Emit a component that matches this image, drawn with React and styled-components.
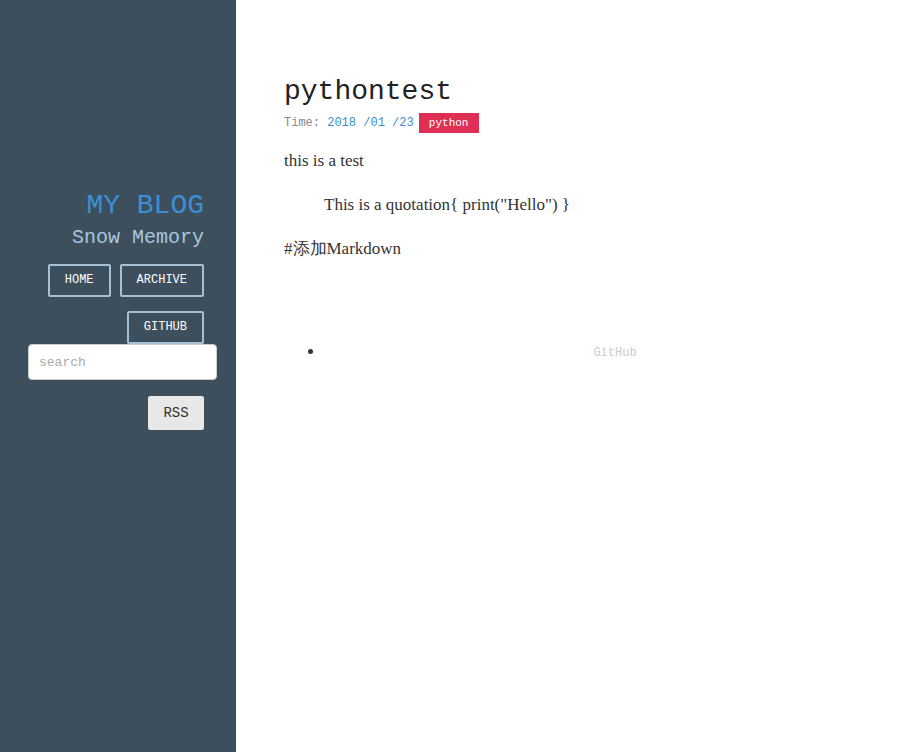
import React from "react";
import styled, { createGlobalStyle } from "styled-components";

const GlobalStyle = createGlobalStyle`
  html, body {
    margin: 0;
    padding: 0;
    background: #fff;
  }
  body {
    font-family: "Liberation Serif", serif;
  }
`;

const Page = styled.div`
  display: flex;
  min-height: 752px;
`;

const Sidebar = styled.aside`
  width: 236px;
  flex-shrink: 0;
  background-color: #3d4f5d;
  box-sizing: border-box;
  padding: 188px 32px 0 28px;
  text-align: right;
  font-family: "Liberation Mono", monospace;
`;

const BlogTitle = styled.h1`
  margin: 0;
  font-size: 28px;
  line-height: 36px;
  font-weight: normal;
  color: #3a8fd6;
`;

const SubTitle = styled.h2`
  margin: 0;
  font-size: 20px;
  line-height: 28px;
  font-weight: normal;
  color: #a9c6de;
`;

const Nav = styled.nav`
  display: flex;
  flex-wrap: wrap;
  justify-content: flex-end;
  gap: 14px 9px;
  margin-top: 12px;
`;

const NavButton = styled.a`
  display: inline-block;
  box-sizing: border-box;
  height: 33px;
  line-height: 29px;
  padding: 0 15px;
  border: 2px solid #a6c0d5;
  border-radius: 2px;
  color: #fff;
  font-size: 12px;
  text-decoration: none;
`;

const SearchInput = styled.input`
  display: block;
  box-sizing: border-box;
  width: 189px;
  height: 36px;
  margin: 0;
  padding: 0 10px;
  border: 1px solid #ccc;
  border-radius: 4px;
  background: #fff;
  font-family: "Liberation Mono", monospace;
  font-size: 13px;
  color: #333;
  &::placeholder {
    color: #aaa;
  }
`;

const RssButton = styled.button`
  display: inline-block;
  margin-top: 16px;
  width: 56px;
  height: 34px;
  border: none;
  border-radius: 2px;
  background: #e8e8e8;
  color: #333;
  font-family: "Liberation Mono", monospace;
  font-size: 14px;
`;

const Main = styled.main`
  flex: 1;
  box-sizing: border-box;
  padding: 74px 5px 0 48px;
  color: #333;
`;

const PostTitle = styled.h1`
  margin: 0;
  font-family: "Liberation Mono", monospace;
  font-size: 28px;
  line-height: 36px;
  font-weight: normal;
  color: #222;
`;

const Meta = styled.div`
  display: flex;
  align-items: center;
  gap: 5px;
  margin-top: 3px;
  font-family: "Liberation Mono", monospace;
  font-size: 12px;
  color: #888;
`;

const DateText = styled.span`
  color: #3a8fd6;
`;

const Tag = styled.span`
  display: inline-block;
  width: 60px;
  height: 20px;
  line-height: 20px;
  text-align: center;
  background: #e02f55;
  color: #fff;
  font-size: 11px;
`;

const Paragraph = styled.p`
  margin: ${(p) => p.$top || 16}px 0 0;
  font-size: 17px;
  line-height: 28px;
  color: #333;
`;

const Quote = styled.blockquote`
  margin: 16px 0 0 40px;
  font-size: 17px;
  line-height: 28px;
  color: #333;
`;

const List = styled.ul`
  margin: 78px 0 0;
  padding-left: 40px;
`;

const ListItem = styled.li`
  text-align: center;
  line-height: 20px;
`;

const SmallLink = styled.a`
  font-family: "Liberation Mono", monospace;
  font-size: 12px;
  color: #ccc;
  text-decoration: none;
`;

export default function App() {
  return (
    <>
      <GlobalStyle />
      <Page>
        <Sidebar>
          <BlogTitle>MY BLOG</BlogTitle>
          <SubTitle>Snow Memory</SubTitle>
          <Nav>
            <NavButton href="#">HOME</NavButton>
            <NavButton href="#">ARCHIVE</NavButton>
            <NavButton href="#">GITHUB</NavButton>
          </Nav>
          <SearchInput placeholder="search" />
          <RssButton>RSS</RssButton>
        </Sidebar>
        <Main>
          <PostTitle>pythontest</PostTitle>
          <Meta>
            <span>
              Time: <DateText>2018 /01 /23</DateText>
            </span>
            <Tag>python</Tag>
          </Meta>
          <Paragraph $top={14}>this is a test</Paragraph>
          <Quote>This is a quotation{"{"} print("Hello") {"}"}</Quote>
          <Paragraph>#添加Markdown</Paragraph>
          <List>
            <ListItem>
              <SmallLink href="#">GitHub</SmallLink>
            </ListItem>
          </List>
        </Main>
      </Page>
    </>
  );
}
